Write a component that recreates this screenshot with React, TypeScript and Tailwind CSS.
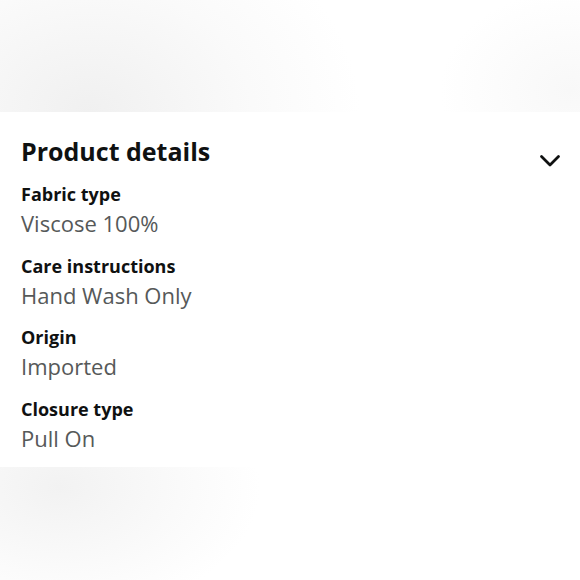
const details = [
  { label: "Fabric type", value: "Viscose 100%" },
  { label: "Care instructions", value: "Hand Wash Only" },
  { label: "Origin", value: "Imported" },
  { label: "Closure type", value: "Pull On" },
];

export default function App() {
  return (
    <div className="w-[580px] h-[580px] bg-white flex flex-col font-['Open_Sans',sans-serif] overflow-hidden">
      {/* fondu du haut */}
      <div className="h-[112px] shrink-0 bg-[radial-gradient(ellipse_130px_100px_at_570px_90px,#f8f8f8,#ffffff00),radial-gradient(ellipse_270px_210px_at_90px_112px,#f0f0f0,#fafafa_60%,#ffffff)]" />

      {/* panneau */}
      <div className="h-[355px] shrink-0 bg-white px-[21px] pt-[22px]">
        <div className="flex justify-between items-start">
          <h2 className="text-[25px] leading-[34px] font-bold text-[#0f1111]">
            Product details
          </h2>
          <svg width="22" height="14" viewBox="0 0 22 14" className="mt-[20px] mr-[-2px]">
            <polyline points="2.5,2.5 11,11 19.5,2.5" fill="none" stroke="#0f1111" strokeWidth="2.8" strokeLinecap="round" strokeLinejoin="round" />
          </svg>
        </div>
        <div className="flex flex-col gap-[13.5px] mt-[13px]">
          {details.map((d) => (
            <div key={d.label} className="flex flex-col">
              <div className="text-[18px] leading-[26px] font-bold text-[#0f1111]">
                {d.label}
              </div>
              <div className="text-[22px] leading-[32px] text-[#565959]">
                {d.value}
              </div>
            </div>
          ))}
        </div>
      </div>

      {/* fondu du bas */}
      <div className="flex-1 bg-[radial-gradient(ellipse_200px_130px_at_60px_20px,#f2f2f2,#fafafa_60%,#ffffff)]" />
    </div>
  );
}
